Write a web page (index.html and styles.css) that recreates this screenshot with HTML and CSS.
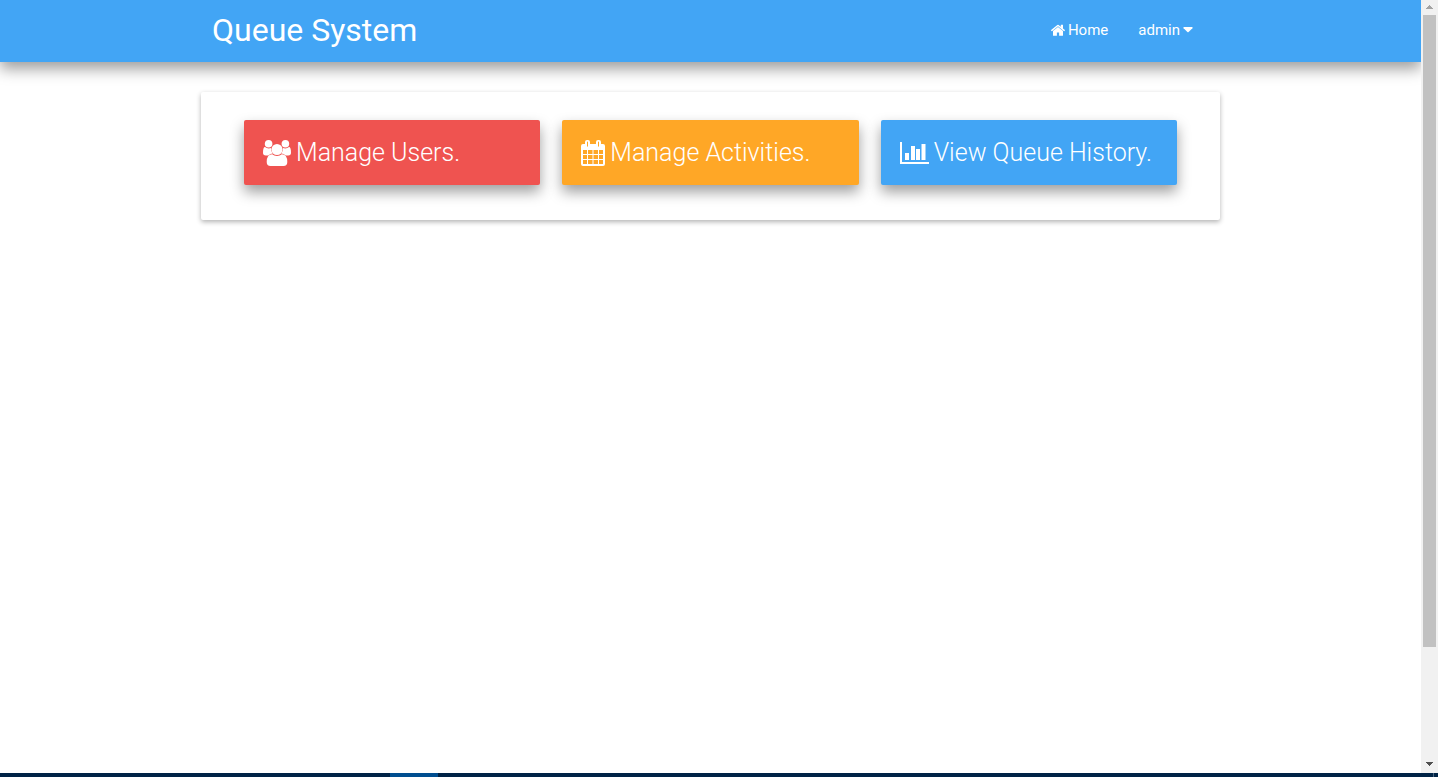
FILE: index.html
```html
<!DOCTYPE html>
<html lang="en">
<head>
<meta charset="utf-8">
<title>Queue System</title>
<link rel="stylesheet" href="styles.css">
</head>
<body>
<div class="screen">
  <div class="page">
    <header class="navbar">
      <div class="container navbar-inner">
        <a class="brand" href="#">Queue System</a>
        <nav class="nav">
          <a class="nav-link" href="#"><svg class="icon-home" viewBox="90 200 1612 1336" aria-hidden="true"><path fill="currentColor" d="M1472 992v480q0 26-19 45t-45 19h-384v-384H768v384H384q-26 0-45-19t-19-45V992q0-1 .5-3t.5-3l575-474 575 474q1 2 1 6zm223-69l-62 74q-8 9-21 11h-3q-13 0-21-7L896 424 204 1001q-12 8-24 7-13-2-21-11l-62-74q-8-10-7-23.5t11-21.5l719-599q32-26 76-26t76 26l244 204V288q0-14 9-23t23-9h192q14 0 23 9t9 23v408l219 182q10 8 11 21.5t-7 23.5z"/></svg>Home</a>
          <button class="nav-link" type="button">admin<svg class="icon-caret" viewBox="0 0 10 6" aria-hidden="true"><path fill="currentColor" d="M.8 0h8.4q.8.5.2 1.2L5.6 5.1q-.6.5-1.2 0L.6 1.2Q0 .5.8 0z"/></svg></button>
        </nav>
      </div>
    </header>
    <main class="container panel">
      <a class="tile tile-red" href="#">
        <svg class="icon-users" viewBox="0 0 28 26" aria-hidden="true"><g fill="currentColor"><circle cx="5.6" cy="3.8" r="3.8"/><circle cx="22.4" cy="3.8" r="3.8"/><path d="M2 7q1.600 1.400 3.700 1.400Q7 8.400 8.100 8q-.2 3.200 1.700 5.500-2.700.1-4.400 2H2.800Q0 15.500 0 12.800 0 7 2 7zM26 7q-1.600 1.400-3.700 1.400Q21 8.400 19.900 8q.2 3.200-1.700 5.500 2.700.1 4.400 2h2.600q2.800 0 2.800-2.700Q28 7 26 7z"/><circle cx="14" cy="9.500" r="5.500"/><path d="M9.200 14.200Q11 15.900 14 15.900t4.800-1.700Q24.300 14.200 24.300 22q0 4-3.800 4h-13q-3.800 0-3.800-4Q3.700 14.200 9.200 14.200z"/></g></svg>
        <span>Manage Users.</span>
      </a>
      <a class="tile tile-orange" href="#">
        <svg class="icon-calendar" viewBox="0 0 24 26" aria-hidden="true"><path fill="currentColor" fill-rule="evenodd" d="M2 4h2V2q0-2 2-2h1q2 0 2 2v2h6V2q0-2 2-2h1q2 0 2 2v2h2q2 0 2 2v18q0 2-2 2H2q-2 0-2-2V6q0-2 2-2zm4-2v4q0 .7.500.7T7 6V2q0-.6-.5-.6T6 2zm11 0v4q0 .7.500.7T18 6V2q0-.6-.5-.6T17 2zM2 10v4h4v-4zm5 0v4h4.500v-4zm5.500 0v4H17v-4zm5.500 0v4h4v-4zM2 15v4h4v-4zm5 0v4h4.500v-4zm5.500 0v4H17v-4zm5.500 0v4h4v-4zM2 20v4h4v-4zm5 0v4h4.500v-4zm5.500 0v4H17v-4zm5.500 0v4h4v-4z"/></svg>
        <span>Manage Activities.</span>
      </a>
      <a class="tile tile-blue" href="#">
        <svg class="icon-chart" viewBox="0 0 29 26" aria-hidden="true"><path fill="currentColor" d="M0 2h2v20h27v2H0zM5 13h4v7H5zM11 6h4v14h-4zM16 9h4v11h-4zM21.500 4h4v16h-4z"/></svg>
        <span>View Queue History.</span>
      </a>
    </main>
  </div>
  <div class="scrollbar" aria-hidden="true">
    <svg class="arrow arrow-up" viewBox="0 0 17 15"><path fill="currentColor" d="M5 9h7v-1h-1v-1h-1v-1h-1v-1h-1v1h-1v1h-1v1h-1z"/></svg>
    <div class="track"><div class="thumb"></div></div>
    <svg class="arrow arrow-down" viewBox="0 0 17 15"><path fill="currentColor" d="M5 4h7v1h-1v1h-1v1h-1v1h-1v-1h-1v-1h-1v-1h-1z"/></svg>
  </div>
</div>
<div class="taskbar"><div class="taskbar-active"></div><div class="taskbar-edge"></div></div>
</body>
</html>
```
FILE: styles.css
```css
* { box-sizing: border-box; }

body {
  margin: 0;
  height: 100vh;
  display: flex;
  flex-direction: column;
  background: #fff;
  color: #fff;
  font-family: Roboto, "Liberation Sans", sans-serif;
  overflow: hidden;
}

.screen { flex: 1; display: flex; min-height: 0; }
.page { flex: 1; overflow: hidden; }

.container { width: 100%; max-width: 1019px; margin: 0 auto; }

.navbar {
  background: #42a5f5;
  box-shadow: 0 7px 14px rgba(0, 0, 0, .38);
}
.navbar-inner {
  display: flex;
  align-items: center;
  justify-content: space-between;
  height: 62px;
  padding: 0 27px 2px 11px;
}

a { color: inherit; text-decoration: none; }
.brand { font-size: 32px; line-height: 40px; }

.nav { display: flex; gap: 30px; }
.nav-link {
  display: flex;
  align-items: center;
  gap: 3px;
  padding: 0;
  border: 0;
  background: none;
  color: inherit;
  font: 15px/20px Roboto, "Liberation Sans", sans-serif;
  cursor: pointer;
}
.icon-home { width: 14px; height: 12px; }
.icon-caret { width: 10px; height: 6px; }

.panel {
  display: grid;
  grid-template-columns: repeat(3, 1fr);
  gap: 22px;
  margin-top: 30px;
  padding: 28px 43px 35px;
  border-radius: 2px;
  background: #fff;
  box-shadow: 0 2px 5px rgba(0, 0, 0, .3);
}

.tile {
  display: flex;
  align-items: center;
  gap: 5px;
  padding: 16px 19px 15px;
  border-radius: 2px;
  box-shadow: 0 7px 14px rgba(0, 0, 0, .38);
  font-size: 25px;
  font-weight: 300;
  line-height: 34px;
  white-space: nowrap;
}
.tile-red { background: #ef5350; }
.tile-orange { background: #ffa726; }
.tile-blue { background: #42a5f5; }

.icon-users { width: 28px; height: 26px; }
.icon-calendar { width: 24px; height: 26px; }
.icon-chart { width: 29px; height: 26px; }

.scrollbar {
  width: 17px;
  display: flex;
  flex-direction: column;
  background: #f1f1f1;
}
.arrow { width: 17px; height: 15px; }
.arrow-up { color: #a3a3a3; }
.arrow-down { color: #505050; }
.track { flex: 1; padding: 0 2px; }
.thumb { height: 85%; background: #c1c1c1; }

.taskbar {
  height: 4px;
  display: flex;
  justify-content: space-between;
  padding: 0 4px 0 390px;
  background: #002346;
}
.taskbar-active { width: 48px; background: #004e90; }
.taskbar-edge { width: 1px; background: #4d6680; }
```
